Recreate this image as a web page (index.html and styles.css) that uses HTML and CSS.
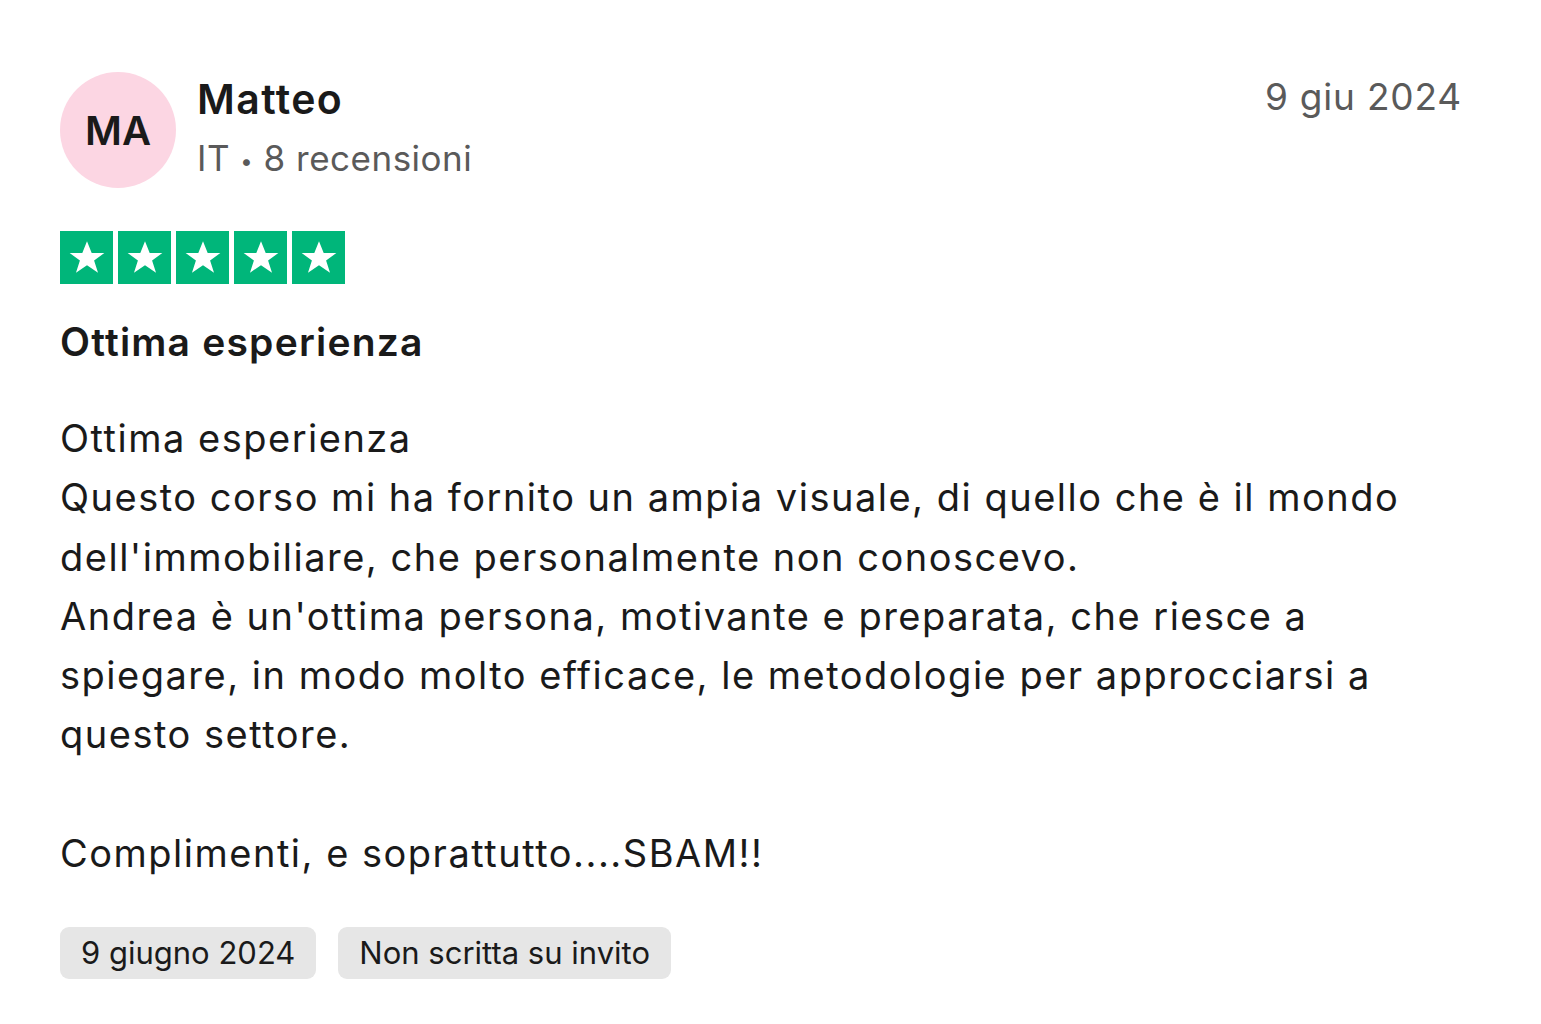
FILE: index.html
```html
<!DOCTYPE html>
<html lang="it">
<head>
<meta charset="utf-8">
<title>Recensione</title>
<link rel="stylesheet" href="styles.css">
</head>
<body>
<article class="review">
  <header class="head">
    <div class="user">
      <div class="avatar">MA</div>
      <div class="meta">
        <div class="name">Matteo</div>
        <div class="sub">IT <span class="dot">•</span> 8 recensioni</div>
      </div>
    </div>
    <div class="date">9 giu 2024</div>
  </header>
  <div class="stars">
    <span class="star"><svg viewBox="0 0 24 24"><path d="M12 3.2l2.45 6.2h6.6l-5.35 3.9 2.05 6.4L12 15.75 6.25 19.7l2.05-6.4L2.95 9.4h6.6z" fill="#fff"/></svg></span>
    <span class="star"><svg viewBox="0 0 24 24"><path d="M12 3.2l2.45 6.2h6.6l-5.35 3.9 2.05 6.4L12 15.75 6.25 19.7l2.05-6.4L2.95 9.4h6.6z" fill="#fff"/></svg></span>
    <span class="star"><svg viewBox="0 0 24 24"><path d="M12 3.2l2.45 6.2h6.6l-5.35 3.9 2.05 6.4L12 15.75 6.25 19.7l2.05-6.4L2.95 9.4h6.6z" fill="#fff"/></svg></span>
    <span class="star"><svg viewBox="0 0 24 24"><path d="M12 3.2l2.45 6.2h6.6l-5.35 3.9 2.05 6.4L12 15.75 6.25 19.7l2.05-6.4L2.95 9.4h6.6z" fill="#fff"/></svg></span>
    <span class="star"><svg viewBox="0 0 24 24"><path d="M12 3.2l2.45 6.2h6.6l-5.35 3.9 2.05 6.4L12 15.75 6.25 19.7l2.05-6.4L2.95 9.4h6.6z" fill="#fff"/></svg></span>
  </div>
  <h2 class="title">Ottima esperienza</h2>
  <p class="body">Ottima esperienza<br>Questo corso mi ha fornito un ampia visuale, di quello che è il mondo dell'immobiliare, che personalmente non conoscevo.<br>Andrea è un'ottima persona, motivante e preparata, che riesce a spiegare, in modo molto efficace, le metodologie per approcciarsi a questo settore.<br><br>Complimenti, e soprattutto....SBAM!!</p>
  <div class="tags">
    <span class="tag">9 giugno 2024</span>
    <span class="tag">Non scritta su invito</span>
  </div>
</article>
</body>
</html>
```
FILE: styles.css
```css
html, body {
  margin: 0;
  padding: 0;
  background: #fff;
}
body {
  font-family: Inter, "Noto Sans", sans-serif;
  color: #1a1a1a;
}
.review {
  width: 1402px;
  padding: 72px 0 0 60px;
}
.head {
  display: flex;
  justify-content: space-between;
  align-items: flex-start;
}
.user {
  display: flex;
  align-items: center;
  gap: 21px;
}
.avatar {
  width: 116px;
  height: 116px;
  border-radius: 50%;
  background: #fcd6e3;
  display: flex;
  align-items: center;
  justify-content: center;
  font-weight: 600;
  font-size: 40px;
  color: #1a1a1a;
}
.meta {
  display: flex;
  flex-direction: column;
  gap: 8px;
}
.name {
  font-weight: 600;
  font-size: 41px;
  line-height: 52px;
  letter-spacing: 1.4px;
}
.sub {
  font-size: 35px;
  line-height: 50px;
  color: #5a5a5a;
  letter-spacing: 0.5px;
}
.dot {
  font-size: 22px;
  vertical-align: middle;
}
.date {
  font-size: 37px;
  line-height: 50px;
  color: #5a5a5a;
  letter-spacing: 0.8px;
}
.stars {
  display: flex;
  gap: 5px;
  margin-top: 43px;
}
.star {
  width: 53px;
  height: 53px;
  background: #00b67a;
  display: flex;
  align-items: center;
  justify-content: center;
}
.star svg {
  width: 46px;
  height: 46px;
}
.title {
  margin: 30px 0 0;
  font-size: 39px;
  font-weight: 600;
  line-height: 56px;
  letter-spacing: 1.2px;
}
.body {
  margin: 39px 0 0;
  font-size: 38px;
  line-height: 59.3px;
  letter-spacing: 1.5px;
  width: 1402px;
}
.tags {
  display: flex;
  gap: 22px;
  margin-top: 44px;
}
.tag {
  background: #e6e6e6;
  border-radius: 9px;
  font-size: 31px;
  line-height: 52px;
  padding: 0 21px;
}
```
